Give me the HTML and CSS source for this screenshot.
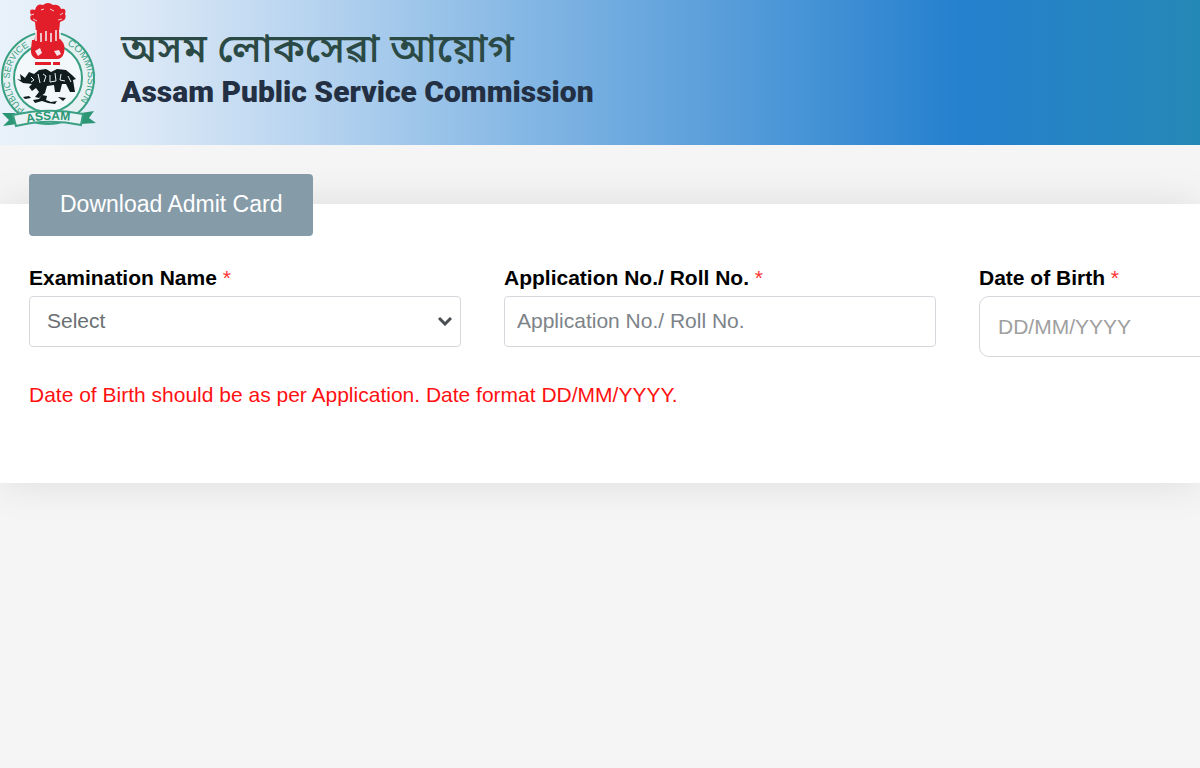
FILE: index.html
```html
<!DOCTYPE html>
<html lang="en">
<head>
  <meta charset="UTF-8">
  <meta name="viewport" content="width=device-width, initial-scale=1.0">
  <title>Assam Public Service Commission</title>
  <link rel="stylesheet" href="styles.css">
</head>
<body>
  <header class="site-header">
    <svg class="logo" viewBox="0 0 96 128" role="img" aria-label="APSC emblem">
      <defs>
        <path id="arcLeft" d="M25 109 A37 37 0 0 1 32 45"/>
        <path id="arcRight" d="M67 45 A37 37 0 0 1 70 110"/>
        <path id="ribbonLine" d="M27 123 Q49 117 79 122"/>
      </defs>

      <!-- seal -->
      <circle cx="48" cy="78" r="46" fill="#e6f1f3" stroke="#3aa083" stroke-width="2"/>
      <circle cx="48" cy="78" r="34" fill="#f3f8fb" stroke="#3aa083" stroke-width="2"/>
      <g class="seal-text">
        <text><textPath href="#arcLeft">PUBLIC SERVICE</textPath></text>
        <text class="seal-right"><textPath href="#arcRight">COMMISSION</textPath></text>
      </g>

      <!-- ribbon -->
      <path d="M2 113 L15 113 L17 124 L3 126 L9 120 Z M94 111 L81 113 L80 124 L96 123 L89 118 Z" fill="#2c9674"/>
      <path d="M13 115 Q48 107 83 114 L81 125 Q48 118 16 126 Z" fill="#e9f3f5" stroke="#3aa083" stroke-width="2"/>
      <text class="ribbon-text"><textPath href="#ribbonLine">ASSAM</textPath></text>

      <!-- rhino -->
      <g fill="#111c1e">
        <path d="M17 79 L21 80 L20 74 L25 78 L29 72 L34 74 L39 70 L46 69 L51 72 L57 69 L66 70 L72 75 L76 79 L73 80 L75 92 L70 92 L66 84 L62 84 L60 92 L55 92 L54 85 L47 86 L45 93 L39 98 L35 97 L39 92 L36 88 L32 91 L29 87 L32 84 L23 83 Z"/>
        <path d="M23 97 L29 96 L31 98 L25 99 Z M33 100 L39 99 L42 95 L47 96 L46 100 L51 102 L57 101 L55 104 L48 103 L42 101 L35 103 Z M58 97 L66 98 L63 101 Z"/>
      </g>
      <path d="M31 77 L34 80 L31 82 M38 74 L40 83 M43 74 L46 76 L44 82 M50 75 L50 82 L56 81 L55 73 M61 74 L60 80 L65 81 M68 76 L71 82" fill="none" stroke="#e9f2f5" stroke-width="1"/>

      <!-- lion capital -->
      <g fill="#e31e2b">
        <path d="M35 10 Q37 3 43 5 Q48 1 53 5 Q59 4 61 9 Q67 8 65 14 Q68 19 60 22 L59 32 L61 42 L34 42 L36 32 L35 22 Q28 20 31 15 Q28 8 35 10 Z"/>
        <path d="M32 40 L61 40 Q66 45 64 53 Q62 59 57 59 L36 59 Q30 56 31 49 Z"/>
        <path d="M35 62 H51 V65 H35 Z M53 62 H60 V65 H53 Z"/>
      </g>
      <path d="M36 30 V41 M41 33 V42 M46 31 V41 M51 33 V42 M56 30 V41 M60 30 V39" stroke="#f2f6fa" stroke-width="1.5"/>
      <path d="M31 15 L34 14 M33 19 L37 21 M63 13 L60 15 M62 19 L58 20 M41 10 L44 9 M50 9 L54 11" stroke="#f0cdd5" stroke-width="1"/>
      <path d="M35 51 L40 48 L42 53 L38 56 Z M54 51 L59 50 L61 54 L57 56 Z" fill="#f6e4ea"/>
    </svg>
    <div class="site-title">
      <p class="title-as" lang="as">অসম লোকসেৱা আয়োগ</p>
      <h1 class="title-en">Assam Public Service Commission</h1>
    </div>
  </header>

  <main>
    <form class="card">
      <button type="button" class="card-tab">Download Admit Card</button>

      <div class="fields">
        <div class="field">
          <label for="exam">Examination Name <span class="required">*</span></label>
          <div class="select-wrap">
            <select id="exam" class="control">
              <option value="">Select</option>
            </select>
            <svg class="chevron" viewBox="0 0 14 9" aria-hidden="true">
              <path d="M1 1 L7 7 L13 1" fill="none" stroke="#4a4f54" stroke-width="3"/>
            </svg>
          </div>
        </div>

        <div class="field">
          <label for="rollNo">Application No./ Roll No. <span class="required">*</span></label>
          <input type="text" id="rollNo" class="control" placeholder="Application No./ Roll No.">
        </div>

        <div class="field">
          <label for="dob">Date of Birth <span class="required">*</span></label>
          <input type="text" id="dob" class="control control-date" placeholder="DD/MM/YYYY">
        </div>
      </div>

      <p class="note">Date of Birth should be as per Application. Date format DD/MM/YYYY.</p>
    </form>
  </main>
</body>
</html>
```
FILE: styles.css
```css
* {
  box-sizing: border-box;
}
body {
  margin: 0;
  min-height: 100vh;
  background-color: #f5f5f5;
  font-family: "Liberation Sans", Arial, sans-serif;
  font-size: 21px;
  color: #000;
}

/* Header */
.site-header {
  display: flex;
  align-items: flex-start;
  gap: 25px;
  height: 145px;
  background: linear-gradient(to right, #e9f2fa 0%, #dbe8f6 12%, #b4d2ef 27%, #73ade0 50%, #2580ce 80%, #2488b6 100%);
}
.logo {
  width: 96px;
  height: 128px;
}
.seal-text {
  font-size: 9px;
  fill: #3aa083;
}
.seal-right {
  font-size: 10px;
}
.ribbon-text {
  font-size: 12px;
  font-weight: bold;
  fill: #2c9674;
}
.site-title {
  padding-top: 28px;
}
.title-as {
  margin: 0;
  font-family: "Noto Sans Bengali", "Lohit Assamese", "Noto Sans", sans-serif;
  font-size: 40px;
  font-weight: 500;
  line-height: 48px;
  color: #2b4a45;
}
.title-en {
  margin: 0;
  font-family: Roboto, "Liberation Sans", sans-serif;
  font-size: 30px;
  font-weight: 900;
  line-height: 32px;
  color: #232f42;
}

/* Form card */
.card {
  margin-top: 59px;
  padding: 0 29px 74px;
  background-color: #fff;
  box-shadow: 0 0 40px rgba(0, 0, 0, 0.1);
}
.card-tab {
  display: block;
  position: relative;
  top: -30px;
  height: 62px;
  padding: 0 31px 2px;
  border: none;
  border-radius: 4px;
  background-color: #869ba8;
  color: #fff;
  font-family: inherit;
  font-size: 23px;
}
.fields {
  display: grid;
  grid-template-columns: repeat(3, 36vw);
  column-gap: 43px;
  overflow-x: clip;
  margin-right: -29px;
}
.field label {
  display: block;
  margin-bottom: 6px;
  font-weight: bold;
  line-height: 24px;
}
.required {
  color: #f33;
  font-weight: normal;
}
.control {
  display: block;
  width: 100%;
  height: 51px;
  padding: 0 12px 2px;
  border: 1px solid #d5d8dc;
  border-radius: 4px;
  background-color: #fff;
  color: #6b6f73;
  font-family: inherit;
  font-size: 21px;
}
.control::placeholder {
  color: #7d8389;
  opacity: 1;
}
.select-wrap {
  position: relative;
}
select.control {
  padding-left: 17px;
  appearance: none;
}
.chevron {
  position: absolute;
  right: 9px;
  top: 21px;
  width: 14px;
  height: 9px;
  pointer-events: none;
}
.control-date {
  height: 61px;
  padding: 0 18px;
  border-radius: 10px;
}
.control-date::placeholder {
  color: #a0a0a0;
}
.note {
  margin: 24px 0 0;
  line-height: 28px;
  color: #f11;
}
```
